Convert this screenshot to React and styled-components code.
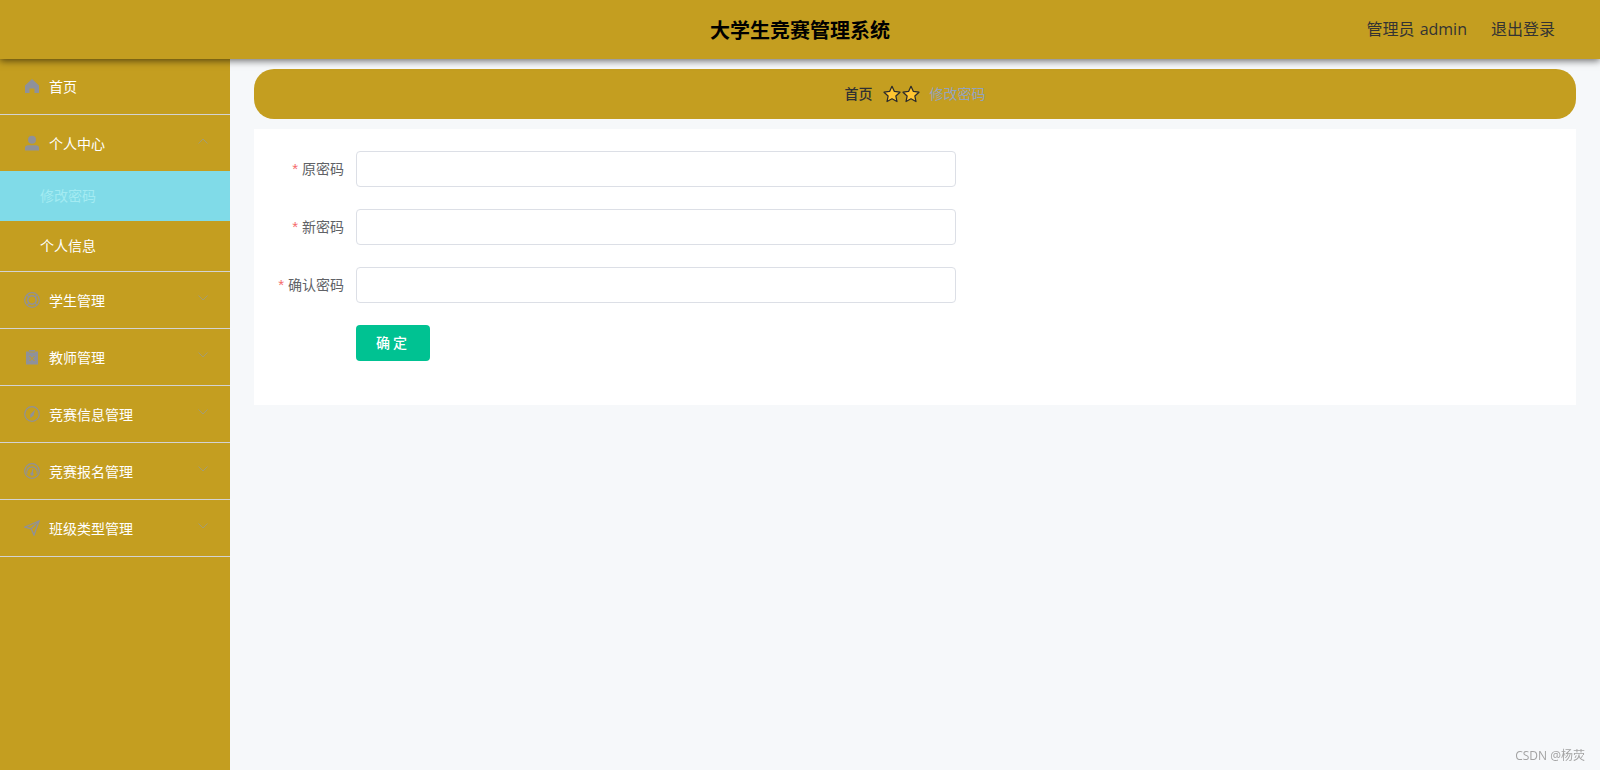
import React from 'react'
import styled, { createGlobalStyle } from 'styled-components'

const gold = '#c49e20'

const GlobalStyle = createGlobalStyle`
  html, body {
    margin: 0;
    height: 100%;
    overflow: hidden;
    background: #f6f8fa;
    font-family: "Noto Sans CJK SC", "Open Sans", sans-serif;
  }
  * { box-sizing: border-box; }
`

const Page = styled.div`
  height: 770px;
  display: flex;
  flex-direction: column;
`

const Header = styled.header`
  position: relative;
  z-index: 2;
  flex: none;
  height: 59px;
  display: grid;
  grid-template-columns: 1fr auto 1fr;
  align-items: center;
  background: ${gold};
  box-shadow: 0 2px 7px rgba(0, 0, 0, 0.55);
`

const Title = styled.h1`
  grid-column: 2;
  margin: 0;
  font-size: 20px;
  font-weight: 700;
  color: #000;
`

const HeaderRight = styled.div`
  display: flex;
  justify-content: flex-end;
  gap: 24px;
  padding: 0 45px 3px 0;
  font-family: "Open Sans", "Noto Sans CJK SC", sans-serif;
  font-size: 16px;
  word-spacing: 1px;
  color: #333;
`

const Body = styled.div`
  flex: 1;
  display: flex;
  min-height: 0;
`

const Sidebar = styled.aside`
  flex: none;
  width: 230px;
  margin-top: -1px;
  background: ${gold};
`

const MenuGroup = styled.div`
  border-bottom: 1px solid #d3d3d3;
`

const MenuTitle = styled.div`
  height: 56px;
  display: flex;
  align-items: center;
  padding: 0 20px;
  font-size: 14px;
  color: #fff;
`

const IconBox = styled.span`
  flex: none;
  width: 24px;
  margin-right: 5px;
  display: flex;
  justify-content: center;
  color: #8f919a;
  svg { display: block; }
`

const Arrow = styled.svg`
  margin-left: auto;
  margin-right: 2px;
  margin-top: -4px;
  color: #a39c74;
`

const SubItem = styled.div`
  height: 50px;
  display: flex;
  align-items: center;
  padding: 0 0 2px 40px;
  font-size: 14px;
  color: ${p => (p.$active ? '#a3ebf2' : '#fff')};
  background: ${p => (p.$active ? '#80dbe8' : 'transparent')};
`

const Main = styled.main`
  flex: 1;
  min-width: 0;
  padding: 10px 24px 0;
`

const Breadcrumb = styled.nav`
  height: 50px;
  display: flex;
  justify-content: center;
  align-items: center;
  padding-bottom: 1px;
  border-radius: 20px;
  background: ${gold};
  font-size: 14px;
`

const CrumbHome = styled.span`
  font-weight: 500;
  color: #303133;
  margin-bottom: 1px;
`

const Stars = styled.span`
  display: flex;
  gap: 1px;
  margin: 0 10px 0 10px;
`

const CrumbCurrent = styled.span`
  color: #93a3bd;
  margin-bottom: 1px;
`

const FormCard = styled.form`
  height: 276px;
  margin-top: 10px;
  padding: 22px 0 0;
  background: #fff;
  display: flex;
  flex-direction: column;
  gap: 22px;
`

const FormRow = styled.div`
  display: flex;
  align-items: center;
  height: 36px;
`

const Label = styled.label`
  flex: none;
  width: 102px;
  padding: 0 12px 2px 0;
  text-align: right;
  font-size: 14px;
  color: #606266;
`

const Required = styled.span`
  margin-right: 4px;
  font-family: "Liberation Sans", sans-serif;
  font-size: 15px;
  color: #f56c6c;
`

const Input = styled.input`
  width: 600px;
  height: 36px;
  padding: 0 15px;
  border: 1px solid #dcdfe6;
  border-radius: 4px;
  background: #fff;
  outline: none;
`

const SubmitButton = styled.button`
  width: 74px;
  height: 36px;
  margin-left: 102px;
  padding: 0 0 2px;
  border: none;
  border-radius: 4px;
  background: #00c292;
  color: #fff;
  font-family: inherit;
  font-size: 14px;
  font-weight: 500;
  letter-spacing: 3px;
  cursor: pointer;
`

const Watermark = styled.div`
  position: fixed;
  right: 15px;
  bottom: 6px;
  font-size: 12px;
  color: #a3a3a3;
  font-family: "Open Sans", "Noto Sans CJK SC", sans-serif;
`

const HomeIcon = () => (
  <svg width="16" height="16" viewBox="0 0 16 16" fill="currentColor">
    <path d="M8 1 L15 7.5 V15 H10.5 V10.5 H5.5 V15 H1 V7.5 Z" />
  </svg>
)

const UserIcon = () => (
  <svg width="16" height="16" viewBox="0 0 16 16" fill="currentColor">
    <circle cx="8" cy="4.7" r="4" />
    <path d="M1 13 Q1 10.2 4 10.2 H12 Q15 10.2 15 13 V15.5 H1 Z" />
  </svg>
)

const HelpIcon = () => (
  <svg width="16" height="16" viewBox="0 0 16 16" fill="none" stroke="currentColor" strokeWidth="1.2">
    <circle cx="8" cy="8" r="7.3" />
    <circle cx="8" cy="8" r="4.2" strokeWidth="1.5" />
    <path d="M3 3 L5.2 5.2 M13 3 L10.8 5.2 M3 13 L5.2 10.8 M13 13 L10.8 10.8" />
  </svg>
)

const ClaimIcon = () => (
  <svg width="16" height="16" viewBox="0 0 16 16">
    <path fill="currentColor" d="M2 2.5 H5 V1 H11 V2.5 H14 V15.5 H2 Z" />
    <path fill="none" stroke={gold} strokeWidth="1" d="M5.5 7 L10.5 12 M10.5 7 L5.5 12" />
    <path fill="none" stroke={gold} strokeWidth="0.8" d="M5 3 H11" />
  </svg>
)

const CompassIcon = () => (
  <svg width="16" height="16" viewBox="0 0 16 16" fill="none" stroke="currentColor" strokeWidth="1.2">
    <circle cx="8" cy="8" r="7.3" />
    <path fill="currentColor" stroke="none" d="M11 3.8 L9.6 9.6 L6.4 12 L6.2 8.6 Z" />
  </svg>
)

const OdometerIcon = () => (
  <svg width="16" height="16" viewBox="0 0 16 16" fill="none" stroke="currentColor" strokeWidth="1.2">
    <circle cx="8" cy="8" r="7.3" />
    <path d="M3 11 A5.3 5.3 0 1 1 13 11" />
    <path d="M8.8 6 L8.3 10" />
    <circle cx="8" cy="11" r="1.1" fill="currentColor" />
  </svg>
)

const SendIcon = () => (
  <svg width="16" height="16" viewBox="0 0 16 16" fill="none" stroke="currentColor" strokeWidth="1.3" strokeLinejoin="miter">
    <path d="M15 1 L1 7 L7.2 8.8 L10 15 Z" />
    <path d="M15 1 L7.2 8.8" />
  </svg>
)

const Chevron = ({ up }) => (
  <Arrow width="10" height="6" viewBox="0 0 10 6" fill="none" stroke="currentColor" strokeWidth="1">
    <path d={up ? 'M0.5 5.5 L5 1 L9.5 5.5' : 'M0.5 0.5 L5 5 L9.5 0.5'} />
  </Arrow>
)

const Star = () => (
  <svg width="18" height="18" viewBox="0 0 24 24" fill="#ffc531" stroke="#2b2b2b" strokeWidth="1.7" strokeLinejoin="round">
    <path d="M12 1.8 L15.2 8.6 L22.6 9.6 L17.2 14.7 L18.6 22 L12 18.4 L5.4 22 L6.8 14.7 L1.4 9.6 L8.8 8.6 Z" />
  </svg>
)

const collapsedMenus = [
  { name: '学生管理', icon: <HelpIcon /> },
  { name: '教师管理', icon: <ClaimIcon /> },
  { name: '竞赛信息管理', icon: <CompassIcon /> },
  { name: '竞赛报名管理', icon: <OdometerIcon /> },
  { name: '班级类型管理', icon: <SendIcon /> },
]

const fields = [
  { id: 'old', label: '原密码' },
  { id: 'new', label: '新密码' },
  { id: 'confirm', label: '确认密码' },
]

export default function App() {
  return (
    <Page>
      <GlobalStyle />
      <Header>
        <Title>大学生竞赛管理系统</Title>
        <HeaderRight>
          <span>管理员 admin</span>
          <span>退出登录</span>
        </HeaderRight>
      </Header>
      <Body>
        <Sidebar>
          <MenuGroup>
            <MenuTitle>
              <IconBox><HomeIcon /></IconBox>
              首页
            </MenuTitle>
          </MenuGroup>
          <MenuGroup>
            <MenuTitle>
              <IconBox><UserIcon /></IconBox>
              个人中心
              <Chevron up />
            </MenuTitle>
            <SubItem $active>修改密码</SubItem>
            <SubItem>个人信息</SubItem>
          </MenuGroup>
          {collapsedMenus.map(menu => (
            <MenuGroup key={menu.name}>
              <MenuTitle>
                <IconBox>{menu.icon}</IconBox>
                {menu.name}
                <Chevron />
              </MenuTitle>
            </MenuGroup>
          ))}
        </Sidebar>
        <Main>
          <Breadcrumb>
            <CrumbHome>首页</CrumbHome>
            <Stars><Star /><Star /></Stars>
            <CrumbCurrent>修改密码</CrumbCurrent>
          </Breadcrumb>
          <FormCard>
            {fields.map(field => (
              <FormRow key={field.id}>
                <Label htmlFor={field.id}><Required>*</Required>{field.label}</Label>
                <Input id={field.id} type="password" />
              </FormRow>
            ))}
            <FormRow>
              <SubmitButton type="button">确定</SubmitButton>
            </FormRow>
          </FormCard>
        </Main>
      </Body>
      <Watermark>CSDN @杨荧</Watermark>
    </Page>
  )
}
